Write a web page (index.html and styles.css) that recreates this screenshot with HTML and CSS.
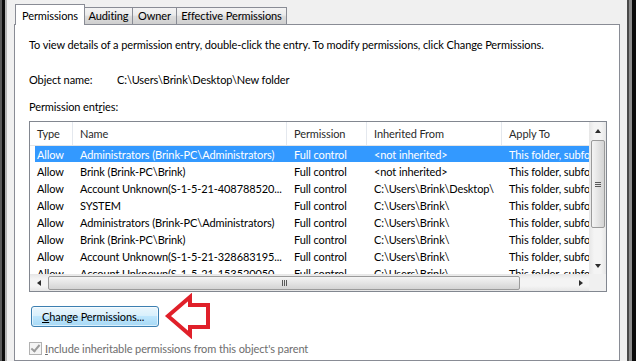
FILE: index.html
```html
<!DOCTYPE html>
<html lang="en">
<head>
  <meta charset="UTF-8">
  <title>Advanced Security Settings for New folder</title>
  <link rel="stylesheet" href="styles.css">
</head>
<body>
  <div class="frame">
    <div class="edge-left"></div>
    <div class="dialog">
      <div class="tabs">
        <div class="tab tab-perm active">Permissions</div>
        <div class="tab tab-audit">Auditing</div>
        <div class="tab tab-owner">Owner</div>
        <div class="tab tab-effective">Effective Permissions</div>
      </div>

      <div class="page">
        <p class="intro">To view details of a permission entry, double-click the entry. To modify permissions, click Change Permissions.</p>

        <div class="object">
          <span class="object-label">Object name:</span>
          <span>C:\Users\Brink\Desktop\New folder</span>
        </div>

        <p class="entries-label">Permission ent<u>r</u>ies:</p>

        <!-- список записів -->
        <div class="listview">
          <div class="list-body">
            <div class="row head">
              <div>Type</div><div>Name</div><div>Permission</div><div>Inherited From</div><div>Apply To</div>
            </div>
            <div class="row selected">
              <div>Allow</div><div>Administrators (Brink-PC\Administrators)</div><div>Full control</div><div>&lt;not inherited&gt;</div><div>This folder, subfolders and files</div>
            </div>
            <div class="row">
              <div>Allow</div><div>Brink (Brink-PC\Brink)</div><div>Full control</div><div>&lt;not inherited&gt;</div><div>This folder, subfolders and files</div>
            </div>
            <div class="row">
              <div>Allow</div><div>Account Unknown(S-1-5-21-408788520...</div><div>Full control</div><div>C:\Users\Brink\Desktop\</div><div>This folder, subfolders and files</div>
            </div>
            <div class="row">
              <div>Allow</div><div>SYSTEM</div><div>Full control</div><div>C:\Users\Brink\</div><div>This folder, subfolders and files</div>
            </div>
            <div class="row">
              <div>Allow</div><div>Administrators (Brink-PC\Administrators)</div><div>Full control</div><div>C:\Users\Brink\</div><div>This folder, subfolders and files</div>
            </div>
            <div class="row">
              <div>Allow</div><div>Brink (Brink-PC\Brink)</div><div>Full control</div><div>C:\Users\Brink\</div><div>This folder, subfolders and files</div>
            </div>
            <div class="row">
              <div>Allow</div><div>Account Unknown(S-1-5-21-328683195...</div><div>Full control</div><div>C:\Users\Brink\</div><div>This folder, subfolders and files</div>
            </div>
            <div class="row">
              <div>Allow</div><div>Account Unknown(S-1-5-21-153520050...</div><div>Full control</div><div>C:\Users\Brink\</div><div>This folder, subfolders and files</div>
            </div>
          </div>

          <div class="vscroll">
            <div class="sb-btn"><span class="arrow up"></span></div>
            <div class="v-thumb"><span class="grip-h"></span></div>
            <div class="v-track"></div>
            <div class="sb-btn"><span class="arrow down"></span></div>
          </div>

          <div class="hscroll">
            <div class="sb-btn"><span class="arrow left"></span></div>
            <div class="h-thumb"><span class="grip-v"></span></div>
            <div class="h-track"></div>
            <div class="sb-btn"><span class="arrow right"></span></div>
          </div>

          <div class="corner"></div>
        </div>

        <div class="actions">
          <button class="change-btn"><u>C</u>hange Permissions...</button>
          <svg class="pointer" width="48" height="46" viewBox="0 0 48 46">
            <path d="M4 23 L26 4 L26 12 L44 12 L44 34 L26 34 L26 42 Z" fill="#fff" stroke="#e0202a" stroke-width="4" stroke-linejoin="miter"/>
          </svg>
        </div>

        <label class="inherit">
          <span class="check"></span>
          <span><u>I</u>nclude inheritable permissions from this object's parent</span>
        </label>
      </div>
    </div>
    <div class="edge-right"></div>
  </div>
</body>
</html>
```

FILE: styles.css
```css
body {
  margin: 0;
  background: #f0f0f0;
  font-family: Lato, "Liberation Sans", sans-serif;
  font-size: 11px;
  letter-spacing: -0.1px;
  color: #000;
  overflow: hidden;
}
.frame {
  display: flex;
  height: 361px;
}
.edge-left {
  width: 7px;
  background: linear-gradient(to right, #5a5a5a 0 2px, #0c0c0c 2px 5px, #b8b8b8 5px 7px);
}
.edge-right {
  width: 9px;
  background: linear-gradient(to right, #4a4a4a 0 2px, #8c8c8c 2px 5px, #0a0a0a 5px 9px);
}
.dialog {
  width: 606px;
  padding: 0 7px;
  display: flex;
  flex-direction: column;
}

/* вкладки */
.tabs {
  display: flex;
  align-items: flex-end;
  height: 24px;
  padding-left: 1px;
}
.tab {
  box-sizing: border-box;
  height: 17px;
  margin-left: -1px;
  border: 1px solid #898c95;
  border-bottom: none;
  background: linear-gradient(#f3f3f3, #ebebeb 45%, #dddddd 50%, #cfcfcf);
  text-align: center;
  line-height: 16px;
  white-space: nowrap;
}
.tab.active {
  height: 21px;
  margin-bottom: -1px;
  margin-left: 0;
  background: #fff;
  position: relative;
  z-index: 1;
  line-height: 21px;
}
.tab-perm { width: 70px; }
.tab-audit { width: 49px; }
.tab-owner { width: 45px; }
.tab-effective { width: 111px; }

.page {
  flex: 1;
  background: #fff;
  border: 1px solid #898c95;
  padding: 12px 11px 0 14px;
}
.intro, .entries-label {
  margin: 0;
  line-height: 15px;
}
.object {
  display: flex;
  margin-top: 20px;
  line-height: 15px;
}
.object-label {
  width: 88px;
}
.entries-label {
  margin-top: 12px;
}
.entries-label u, .change-btn u, .inherit u {
  text-decoration-thickness: 1px;
}

/* список */
.listview {
  box-sizing: border-box;
  width: 578px;
  height: 171px;
  margin-top: 7px;
  border: 1px solid #828790;
  display: grid;
  grid-template-columns: 1fr 17px;
  grid-template-rows: 1fr 17px;
}
.list-body {
  overflow: hidden;
}
.row {
  display: grid;
  grid-template-columns: 43px 214px 80px 135px 220px;
  height: 17px;
  line-height: 17px;
  white-space: nowrap;
}
.row > div {
  padding-left: 7px;
  overflow: hidden;
}
.row.head {
  box-sizing: border-box;
  height: 24px;
  line-height: 23px;
  border-bottom: 1px solid #e5e5e5;
  color: #2a2a2a;
}
.row.head > div {
  border-right: 1px solid #e4e8ee;
}
.row.selected {
  color: #fff;
  background: linear-gradient(#3399ff, #3399ff) no-repeat 5px 0 / calc(100% - 5px) 16px;
}

/* прокрутка */
.vscroll, .hscroll {
  display: flex;
  background: linear-gradient(to right, #e6e6e6, #f4f4f4 30%, #f4f4f4 70%, #e6e6e6);
}
.vscroll {
  flex-direction: column;
}
.hscroll {
  background: linear-gradient(#e6e6e6, #f4f4f4 30%, #f4f4f4 70%, #e6e6e6);
}
.sb-btn {
  width: 17px;
  height: 17px;
  flex: none;
  display: flex;
  align-items: center;
  justify-content: center;
}
.arrow {
  width: 0;
  height: 0;
  border: 3px solid transparent;
}
.arrow.up { border-bottom: 4px solid #2c2c2c; border-top: none; }
.arrow.down { border-top: 4px solid #2c2c2c; border-bottom: none; }
.arrow.left { border-right: 4px solid #2c2c2c; border-left: none; }
.arrow.right { border-left: 4px solid #2c2c2c; border-right: none; }
.v-thumb {
  box-sizing: border-box;
  height: 88px;
  margin: 1px 1px 0 2px;
  border: 1px solid #9a9a9a;
  border-radius: 2px;
  background: linear-gradient(to right, #f4f4f4, #e4e4e4 50%, #d4d4d4);
  display: flex;
  align-items: center;
  justify-content: center;
}
.v-track, .h-track {
  flex: 1;
}
.h-thumb {
  box-sizing: border-box;
  width: 472px;
  margin: 2px 0 1px 1px;
  border: 1px solid #9a9a9a;
  border-radius: 2px;
  background: linear-gradient(#f4f4f4, #e4e4e4 50%, #d4d4d4);
  display: flex;
  align-items: center;
  justify-content: center;
}
.grip-h {
  width: 6px;
  height: 5px;
  background: repeating-linear-gradient(#5a5a5a 0 1px, transparent 1px 2px);
}
.grip-v {
  width: 5px;
  height: 6px;
  background: repeating-linear-gradient(to right, #5a5a5a 0 1px, transparent 1px 2px);
}
.corner {
  background: #f0f0f0;
}

/* кнопка */
.actions {
  display: flex;
  align-items: center;
  margin-top: 13px;
}
.change-btn {
  box-sizing: border-box;
  width: 128px;
  height: 21px;
  margin-left: 2px;
  padding: 0 0 0 10px;
  text-align: left;
  font: inherit;
  letter-spacing: inherit;
  color: #000;
  border: 1px solid #3c7fb1;
  border-radius: 3px;
  background: linear-gradient(#eaf6fd, #d9f0fc 45%, #bee6fd 50%, #a7d9f5);
  box-shadow: inset 0 0 0 1px rgba(255, 255, 255, 0.6);
}
.pointer {
  margin: -12px 0 -12px 5px;
}

.inherit {
  display: flex;
  align-items: center;
  margin-top: 15px;
  color: #6d6d6d;
  line-height: 13px;
}
.check {
  box-sizing: border-box;
  width: 13px;
  height: 13px;
  margin-right: 3px;
  border: 1px solid #b1b1b1;
  background: #f4f4f4;
  position: relative;
}
.check::after {
  content: "";
  position: absolute;
  left: 3px;
  top: 0px;
  width: 3px;
  height: 7px;
  border: solid #9a9a9a;
  border-width: 0 2px 2px 0;
  transform: rotate(40deg);
}
```
